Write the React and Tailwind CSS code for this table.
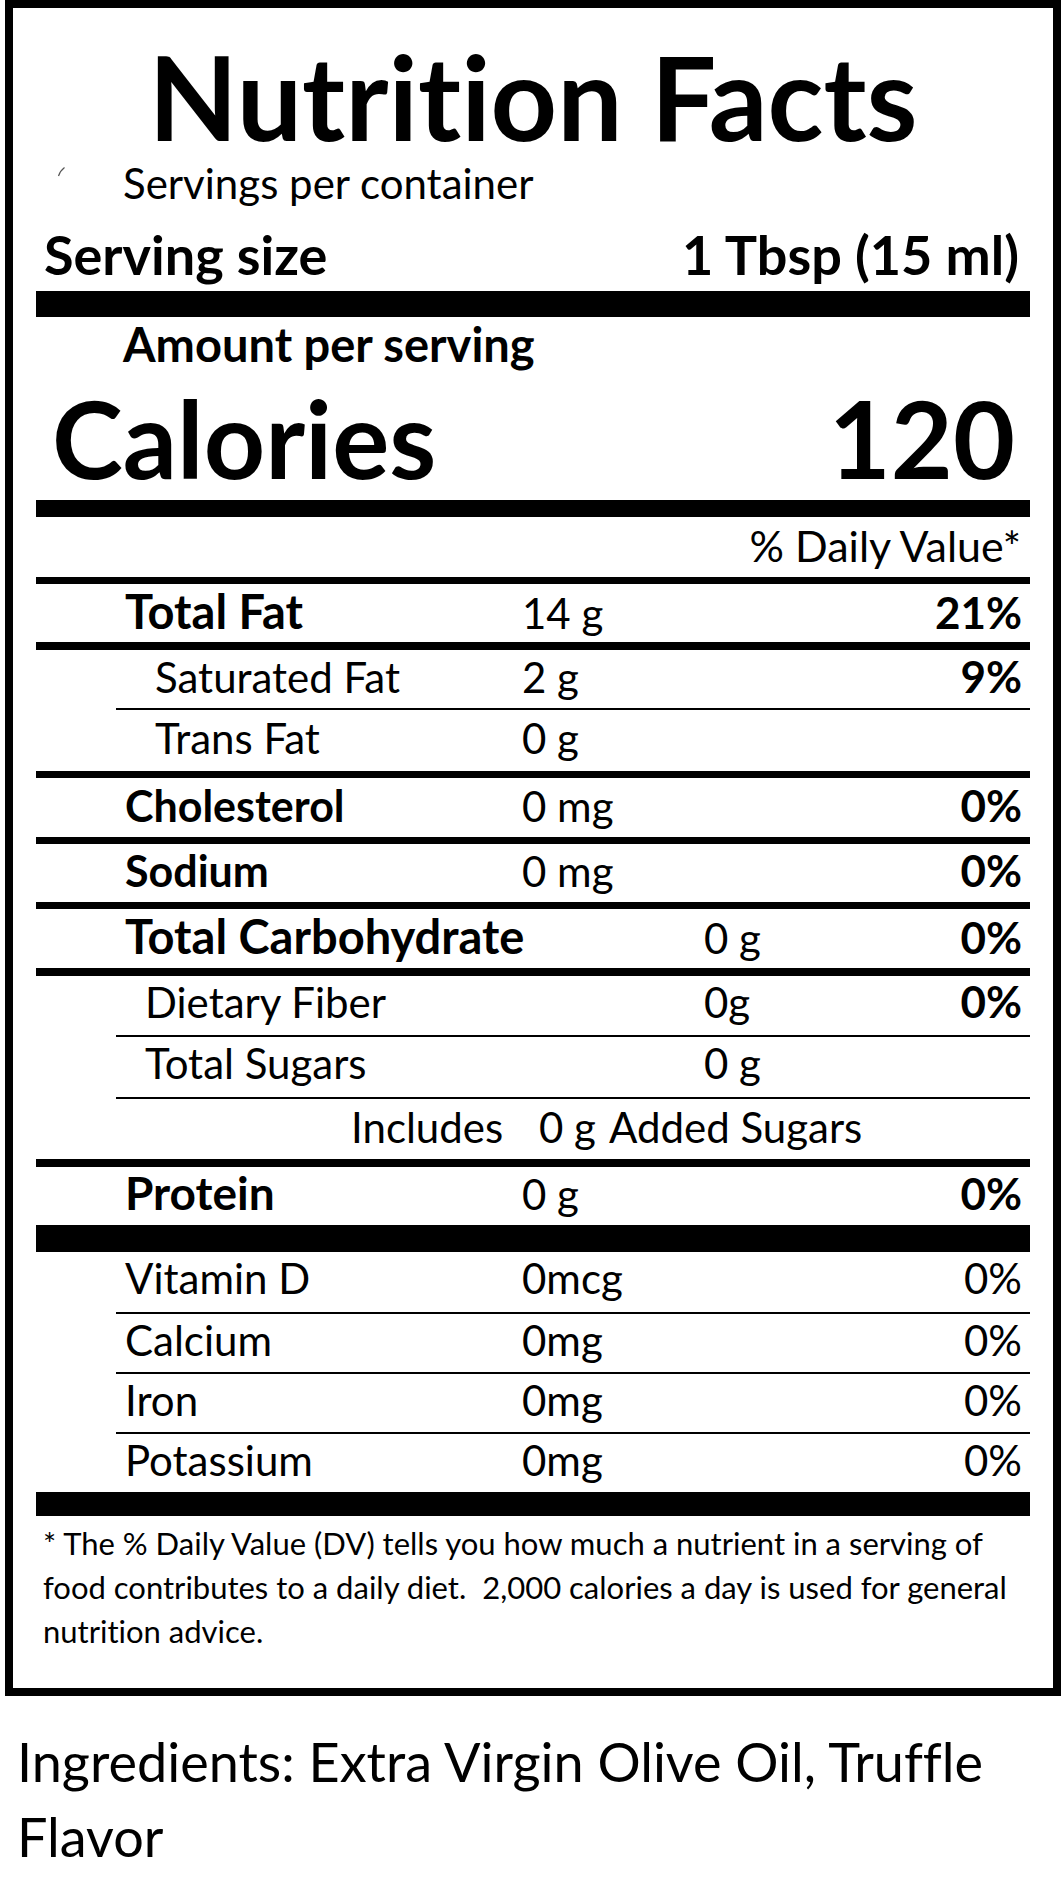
import React from "react";

const Bar = ({ className }) => <div className={`bg-black ${className}`} />;

function Row({ box, label, labelCls, col, amount, dv, dvBold }) {
  return (
    <div className={`flex items-baseline leading-none text-[42px] ${box}`}>
      <div className={`shrink-0 ${col} ${labelCls}`}>{label}</div>
      <div className="flex-1">{amount}</div>
      <div className={`pr-[8px] ${dvBold ? "font-bold text-[44px]" : ""}`}>{dv}</div>
    </div>
  );
}

export default function App() {
  return (
    <div className="w-[1061px] bg-white text-black font-['Lato',sans-serif] [font-variant-ligatures:none]">
      <div className="ml-[5px] w-[1056px] h-[1696px] border-[8px] border-black">
        {/* header */}
        <div className="h-[147px] pt-[39px] text-center text-[116px] font-bold leading-[100px]">
          Nutrition Facts
        </div>
        <div className="relative h-[48px] pt-[7px] pl-[110px] text-[42px] leading-none">
          <svg className="absolute left-[44px] top-[11px]" width="9" height="11" viewBox="0 0 9 11">
            <path d="M1.5 10 Q3 5 7.5 1.5" fill="none" stroke="#555" strokeWidth="1.2" />
          </svg>
          Servings per container
        </div>
        <div className="flex h-[88px] justify-between pt-[25px] pl-[31px] pr-[34px] text-[54px] font-bold leading-none">
          <span>Serving size</span>
          <span>1 Tbsp (15 ml)</span>
        </div>

        <div className="px-[23px]">
          <Bar className="h-[26px]" />
          <div className="h-[60px] pt-[4px] pl-[87px] text-[47px] font-bold leading-none">
            Amount per serving
          </div>
          <div className="flex h-[123px] justify-between pt-[7px] pl-[16px] pr-[15px] text-[107px] font-bold leading-none">
            <span>Calories</span>
            <span>120</span>
          </div>
          <Bar className="h-[17px]" />
          <div className="h-[60px] pt-[7px] pr-[9px] text-right text-[43px] leading-none">
            % Daily Value*
          </div>
          <Bar className="h-[7px]" />

          <Row box="h-[58px] pt-[4px]" col="w-[486px] pl-[89px]" labelCls="font-bold text-[47px]" label="Total Fat" amount="14 g" dv="21%" dvBold />
          <Bar className="h-[8px]" />
          <Row box="h-[58px] pt-[4px]" col="w-[486px] pl-[119px]" label="Saturated Fat" amount="2 g" dv="9%" dvBold />
          <Bar className="ml-[80px] h-[2px]" />
          <Row box="h-[61px] pt-[7px]" col="w-[486px] pl-[119px]" label="Trans Fat" amount="0 g" dv="" />
          <Bar className="h-[7px]" />
          <Row box="h-[59px] pt-[5px]" col="w-[486px] pl-[89px]" labelCls="font-bold text-[43px]" label="Cholesterol" amount="0 mg" dv="0%" dvBold />
          <Bar className="h-[7px]" />
          <Row box="h-[58px] pt-[4px]" col="w-[486px] pl-[89px]" labelCls="font-bold text-[43px]" label="Sodium" amount="0 mg" dv="0%" dvBold />
          <Bar className="h-[7px]" />
          <Row box="h-[59px] pt-[4px]" col="w-[668px] pl-[89px]" labelCls="font-bold text-[47px]" label="Total Carbohydrate" amount="0 g" dv="0%" dvBold />
          <Bar className="h-[8px]" />
          <Row box="h-[59px] pt-[3px]" col="w-[668px] pl-[109px]" label="Dietary Fiber" amount="0g" dv="0%" dvBold />
          <Bar className="ml-[80px] h-[2px]" />
          <Row box="h-[60px] pt-[5px]" col="w-[668px] pl-[109px]" label="Total Sugars" amount="0 g" dv="" />
          <Bar className="ml-[80px] h-[2px]" />
          <div className="flex h-[60px] items-baseline pt-[7px] pl-[315px] text-[42px] leading-none">
            <span className="w-[188px]">Includes</span>
            <span className="w-[70px]">0 g</span>
            <span>Added Sugars</span>
          </div>
          <Bar className="h-[8px]" />
          <Row box="h-[58px] pt-[3px]" col="w-[486px] pl-[89px]" labelCls="font-bold text-[46px]" label="Protein" amount="0 g" dv="0%" dvBold />
          <Bar className="h-[27px]" />
          <Row box="h-[60px] pt-[5px]" col="w-[486px] pl-[89px]" label="Vitamin D" amount="0mcg" dv="0%" />
          <Bar className="ml-[80px] h-[2px]" />
          <Row box="h-[58px] pt-[5px]" col="w-[486px] pl-[89px]" label="Calcium" amount="0mg" dv="0%" />
          <Bar className="ml-[80px] h-[2px]" />
          <Row box="h-[58px] pt-[5px]" col="w-[486px] pl-[89px]" label="Iron" amount="0mg" dv="0%" />
          <Bar className="ml-[80px] h-[2px]" />
          <Row box="h-[58px] pt-[5px]" col="w-[486px] pl-[89px]" label="Potassium" amount="0mg" dv="0%" />
          <Bar className="h-[24px]" />

          <div className="pt-[5px] pl-[7px] text-[31px] leading-[44px] whitespace-pre">
            <div>* The % Daily Value (DV) tells you how much a nutrient in a serving of</div>
            <div>food contributes to a daily diet.  2,000 calories a day is used for general</div>
            <div>nutrition advice.</div>
          </div>
        </div>
      </div>

      <div className="mt-[28px] pl-[17px] text-[54px] leading-[75px]">
        Ingredients: Extra Virgin Olive Oil, Truffle
        <br />
        Flavor
      </div>
    </div>
  );
}
